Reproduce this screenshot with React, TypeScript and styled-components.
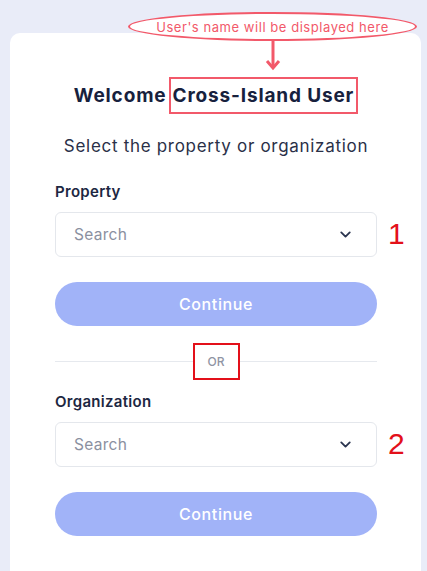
import React from "react";
import styled, { createGlobalStyle } from "styled-components";
import { ChevronDown } from "lucide-react";

const GlobalStyle = createGlobalStyle`
  html, body {
    margin: 0;
    padding: 0;
    background: #e9ecf8;
    font-family: "Inter", "Open Sans", sans-serif;
  }
`;

const Page = styled.div`
  position: relative;
  width: 427px;
  height: 571px;
  overflow: hidden;
  padding-top: 33px;
  box-sizing: border-box;
`;

const Card = styled.div`
  margin: 0 6px 0 10px;
  height: 560px;
  background: #ffffff;
  border-radius: 10px;
  padding: 44px 44px 0 45px;
  box-sizing: border-box;
  display: flex;
  flex-direction: column;
`;

const Title = styled.h1`
  margin: 0;
  text-align: center;
  font-size: 19px;
  font-weight: 700;
  color: #17213d;
  letter-spacing: 0.85px;
  display: flex;
  justify-content: center;
  align-items: center;
  gap: 2px;
`;

const NameBox = styled.span`
  border: 2px solid #f2596a;
  padding: 5px 2px;
`;

const Subtitle = styled.p`
  margin: 22px 0 0;
  text-align: center;
  font-size: 17px;
  font-weight: 400;
  color: #2a3048;
  letter-spacing: 0.7px;
`;

const Label = styled.div<{ $gap: number }>`
  margin-top: ${(p) => p.$gap}px;
  font-size: 15px;
  font-weight: 600;
  color: #1d2742;
  letter-spacing: 0.3px;
`;

const FieldRow = styled.div`
  position: relative;
  margin-top: 11px;
`;

const Select = styled.div`
  height: 45px;
  border: 1px solid #e4e7ec;
  border-radius: 6px;
  box-sizing: border-box;
  display: flex;
  align-items: center;
  justify-content: space-between;
  padding: 0 22px 0 18px;
  font-size: 15.5px;
  letter-spacing: 0.3px;
  color: #8b90a0;
  svg {
    color: #2b3550;
  }
`;

const Number = styled.span`
  position: absolute;
  left: 333px;
  top: 50%;
  transform: translateY(-52%);
  font-family: "Liberation Sans", Arial, sans-serif;
  font-size: 30px;
  color: #e3101a;
`;

const Button = styled.button`
  margin-top: 25px;
  height: 44px;
  width: 100%;
  border: 0;
  border-radius: 22px;
  background: #a1b3f8;
  color: #ffffff;
  font-family: inherit;
  font-size: 16px;
  font-weight: 500;
  letter-spacing: 0.6px;
`;

const Divider = styled.div`
  margin-top: 17px;
  display: flex;
  align-items: center;
`;

const Line = styled.div`
  flex: 1;
  height: 1px;
  background: #e6e9ee;
`;

const OrBox = styled.div`
  width: 47px;
  height: 37px;
  box-sizing: border-box;
  border: 2px solid #e3101a;
  display: flex;
  align-items: center;
  justify-content: center;
  font-size: 12px;
  font-weight: 500;
  color: #8f94a3;
`;

const Callout = styled.div`
  position: absolute;
  left: 128px;
  top: 12px;
  width: 289px;
  height: 29px;
  box-sizing: border-box;
  border: 2px solid #f2596a;
  border-radius: 50%;
  background: #ffffff;
  display: flex;
  align-items: center;
  justify-content: center;
  font-size: 13px;
  letter-spacing: 0.55px;
  color: #f2596a;
`;

const Arrow = styled.svg`
  position: absolute;
  left: 265px;
  top: 40px;
`;

export default function App() {
  return (
    <Page>
      <GlobalStyle />
      <Card>
        <Title>
          Welcome <NameBox>Cross-Island User</NameBox>
        </Title>
        <Subtitle>Select the property or organization</Subtitle>

        <Label $gap={26}>Property</Label>
        <FieldRow>
          <Select>
            Search
            <ChevronDown size={17} strokeWidth={2.6} />
          </Select>
          <Number>1</Number>
        </FieldRow>
        <Button>Continue</Button>

        <Divider>
          <Line />
          <OrBox>OR</OrBox>
          <Line />
        </Divider>

        <Label $gap={12}>Organization</Label>
        <FieldRow>
          <Select>
            Search
            <ChevronDown size={17} strokeWidth={2.6} />
          </Select>
          <Number>2</Number>
        </FieldRow>
        <Button>Continue</Button>
      </Card>

      <Callout>User's name will be displayed here</Callout>
      <Arrow width="16" height="32" viewBox="0 0 16 32">
        <line x1="8" y1="0" x2="8" y2="28" stroke="#f2596a" strokeWidth="3" />
        <polyline points="2,21 8,28 14,21" fill="none" stroke="#f2596a" strokeWidth="3" />
      </Arrow>
    </Page>
  );
}
